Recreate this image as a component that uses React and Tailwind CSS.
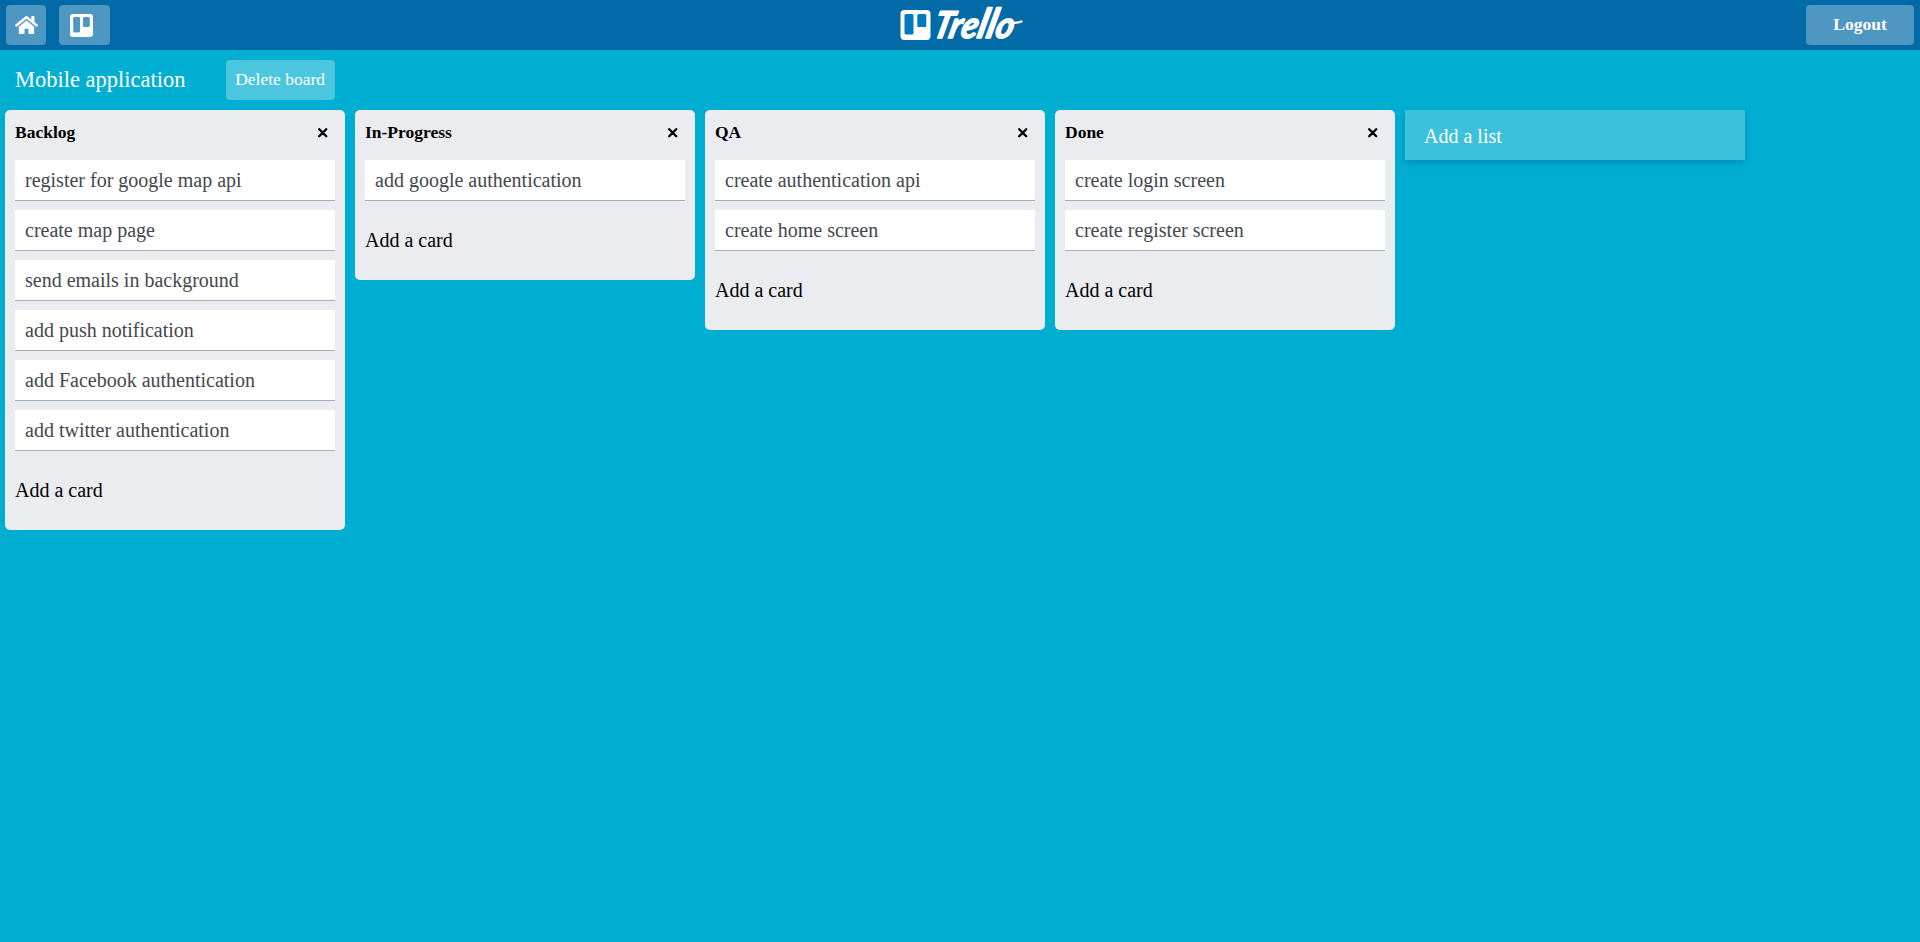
import { FaHome } from "react-icons/fa";

const lists = [
  {
    title: "Backlog",
    cards: [
      "register for google map api",
      "create map page",
      "send emails in background",
      "add push notification",
      "add Facebook authentication",
      "add twitter authentication",
    ],
  },
  { title: "In-Progress", cards: ["add google authentication"] },
  { title: "QA", cards: ["create authentication api", "create home screen"] },
  { title: "Done", cards: ["create login screen", "create register screen"] },
];

function Logo() {
  return (
    <svg className="block h-[50px] w-[125px] overflow-visible" viewBox="0 0 125 50" role="img" aria-label="Trello">
      <rect x="2.5" y="10" width="30" height="30" rx="4" fill="#fff" />
      <rect x="6.5" y="14" width="9" height="20.5" rx="1.5" fill="#0079bf" />
      <rect x="19.3" y="14" width="9" height="13" rx="1.5" fill="#0079bf" />
      <text
        transform="translate(33.5 38) skewX(-14)"
        className="font-['Lato',sans-serif] text-[37px] font-bold italic"
        fill="#fff"
        stroke="#fff"
        strokeWidth="1.4"
        strokeLinejoin="round"
        textLength="80"
        lengthAdjust="spacingAndGlyphs"
      >
        Tre<tspan className="text-[41px]">ll</tspan>o
      </text>
      <path d="M113 22.5Q118 23.5 123.5 21.5" fill="none" stroke="#fff" strokeWidth="2.2" strokeLinecap="round" />
    </svg>
  );
}

function BoardIcon() {
  return (
    <svg className="h-[23px] w-[23px]" viewBox="0 0 23 23">
      <rect width="23" height="23" rx="3" fill="#fff" />
      <rect x="3.2" y="3" width="6.8" height="15.4" rx="1.4" fill="#4f97c3" />
      <rect x="13" y="3" width="6.8" height="10" rx="1.4" fill="#4f97c3" />
    </svg>
  );
}

function CloseIcon() {
  return (
    <svg className="h-2.5 w-2.5" viewBox="0 0 10 10" fill="none" stroke="#000" strokeWidth="2.3" strokeLinecap="round">
      <path d="M1.2 1.2 8.2 8.2M8.2 1.2 1.2 8.2" />
    </svg>
  );
}

function List({ title, cards }) {
  return (
    <section className="w-[340px] rounded-[5px] bg-[#ebecf0] px-2.5 pb-[25px]">
      <header className="flex h-[50px] items-start justify-between pt-[9px] pr-[7px]">
        <h2 className="text-[17.5px] leading-[26px] font-bold text-black">{title}</h2>
        <button className="mt-[9px]" aria-label="Close">
          <CloseIcon />
        </button>
      </header>
      <ul className="flex flex-col gap-2.5">
        {cards.map((card) => (
          <li
            key={card}
            className="h-10 bg-white pl-2.5 text-[20px] leading-[40px] text-[#44484f] shadow-[0_1px_0_rgba(9,30,66,0.3)]"
          >
            {card}
          </li>
        ))}
      </ul>
      <button className="mt-[25px] block h-[30px] text-[20px] leading-[30px] text-black">Add a card</button>
    </section>
  );
}

export default function App() {
  return (
    <div className="min-h-screen bg-[#00aed1] font-['Liberation_Serif',serif]">
      <nav className="flex h-[50px] items-center justify-between bg-[#026aa7] pr-1.5 pl-1.5">
        <div className="flex flex-1 gap-[13px]">
          <button className="flex h-10 w-10 items-center justify-center rounded bg-[#4f97c3] text-white" aria-label="Home">
            <FaHome className="h-[22px] w-[23px]" />
          </button>
          <button className="flex h-10 w-[51px] items-center rounded bg-[#4f97c3] pl-[11px]" aria-label="Boards">
            <BoardIcon />
          </button>
        </div>
        <Logo />
        <div className="flex flex-1 justify-end">
          <button className="h-10 w-[108px] rounded bg-[#4f97c3] pb-0.5 text-[17.5px] font-bold text-white">Logout</button>
        </div>
      </nav>
      <div className="flex h-[60px] items-center gap-10 pl-[15px]">
        <h1 className="text-[22.5px] text-white">Mobile application</h1>
        <button className="h-10 w-[109px] rounded bg-[#4cc6de] pb-0.5 text-[17.5px] text-white">Delete board</button>
      </div>
      <main className="flex items-start gap-2.5 pl-[5px]">
        {lists.map((list) => (
          <List key={list.title} {...list} />
        ))}
        <button className="h-[50px] w-[340px] bg-[#3cc1db] pt-px pl-[19px] text-left text-[20px] text-white shadow-[0_3px_6px_rgba(0,60,110,0.25)]">
          Add a list
        </button>
      </main>
    </div>
  );
}
